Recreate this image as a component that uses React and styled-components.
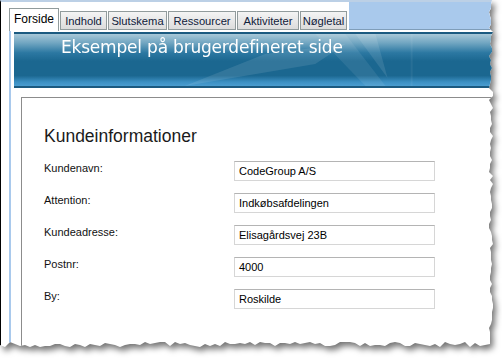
import React from 'react'
import styled, { createGlobalStyle } from 'styled-components'

const GlobalStyle = createGlobalStyle`
    html, body {
        margin: 0;
        padding: 0;
        background: #ffffff;
    }
    body {
        width: 502px;
        height: 362px;
        overflow: hidden;
        font-family: "Liberation Sans", Arial, sans-serif;
    }
`

const tabs = [
    { name: 'Forside', width: 50 },
    { name: 'Indhold', width: 47 },
    { name: 'Slutskema', width: 59 },
    { name: 'Ressourcer', width: 68 },
    { name: 'Aktiviteter', width: 62 },
    { name: 'Nøgletal', width: 47 },
]

const fields = [
    { label: 'Kundenavn:', value: 'CodeGroup A/S' },
    { label: 'Attention:', value: 'Indkøbsafdelingen' },
    { label: 'Kundeadresse:', value: 'Elisagårdsvej 23B' },
    { label: 'Postnr:', value: '4000' },
    { label: 'By:', value: 'Roskilde' },
]

// jagged "torn paper" edge on right and bottom
function tornPolygon() {
    let seed = 7
    const rnd = () => {
        seed = (seed * 9301 + 49297) % 233280
        return seed / 233280
    }
    const pts = ['0px 0px', '492px 0px']
    for (let y = 4; y < 344; y += 4) {
        pts.push(`${489 + Math.round(rnd() * 4)}px ${y}px`)
    }
    for (let x = 490; x > 0; x -= 5) {
        pts.push(`${x}px ${342 + Math.round(rnd() * 5)}px`)
    }
    pts.push('0px 345px')
    return `polygon(${pts.join(',')})`
}

function App() {
    return (
        <>
            <GlobalStyle />
            <Shadow>
                <Sheet style={{ clipPath: tornPolygon() }}>
                    <TabStrip>
                        {tabs.map((t, i) => (
                            <Tab key={t.name} active={i === 0} w={t.width}>{t.name}</Tab>
                        ))}
                        <StripFill />
                    </TabStrip>
                    <TabPage>
                        <Banner>
                            <Rays viewBox="0 0 480 52" preserveAspectRatio="none">
                                <path d="M170 52 L250 20 L330 10 L300 30 Z" fill="rgba(255,255,255,0.10)" />
                                <path d="M300 0 L350 52 L370 52 L330 0 Z" fill="rgba(255,255,255,0.08)" />
                                <path d="M340 0 L372 44 L360 0 Z" fill="rgba(255,255,255,0.10)" />
                                <rect x="395" y="0" width="2" height="52" fill="rgba(255,255,255,0.06)" />
                            </Rays>
                            <Title>Eksempel på brugerdefineret side</Title>
                        </Banner>
                        <Panel>
                            <Heading>Kundeinformationer</Heading>
                            <Form>
                                {fields.map(f => (
                                    <Row key={f.label}>
                                        <Label>{f.label}</Label>
                                        <Field>{f.value}</Field>
                                    </Row>
                                ))}
                            </Form>
                        </Panel>
                    </TabPage>
                </Sheet>
            </Shadow>
        </>
    )
}

export default App

const Shadow = styled.div`
    width: 502px;
    height: 362px;
    filter: drop-shadow(3px 4px 3px rgba(0, 0, 0, 0.55));
`

const Sheet = styled.div`
    width: 496px;
    height: 350px;
    background: #ffffff;
    border-left: 1px solid #000000;
    border-top: 2px solid #bcd0e6;
    box-sizing: border-box;
    display: flex;
    flex-direction: column;
`

const TabStrip = styled.div`
    display: flex;
    align-items: flex-end;
    height: 28px;
    padding-left: 8px;
    background: #ffffff;
`

const Tab = styled.div`
    width: ${p => p.w}px;
    height: ${p => (p.active ? '23px' : '19px')};
    display: flex;
    align-items: center;
    justify-content: center;
    font-size: ${p => (p.active ? '12px' : '11.2px')};
    color: ${p => (p.active ? '#000000' : '#10203a')};
    background: ${p => (p.active ? '#ffffff' : 'linear-gradient(#f4f4f4, #dcdcdc)')};
    border: 1px solid #919b9c;
    border-bottom: ${p => (p.active ? 'none' : '1px solid #919b9c')};
    margin-right: 1px;
    padding-bottom: ${p => (p.active ? '3px' : '0')};
    box-sizing: border-box;
    position: relative;
    top: ${p => (p.active ? '1px' : '0')};
`

const StripFill = styled.div`
    flex: 1;
    align-self: stretch;
    background: #a9c9ec;
    margin-left: 1px;
    border-bottom: 1px solid #7f9db9;
`

const TabPage = styled.div`
    flex: 1;
    margin-left: 8px;
    border-left: 2px solid #a9c9ec;
    padding-left: 3px;
    display: flex;
    flex-direction: column;
`

const Banner = styled.div`
    position: relative;
    height: 52px;
    margin-top: 2px;
    border-top: 2px solid #1b5a80;
    border-bottom: 2px solid #1b5a80;
    background: linear-gradient(
        #a8c8d8 0%,
        #6ea4c0 18%,
        #2c78a2 36%,
        #1b6790 52%,
        #1b6790 80%,
        #3b8fc2 92%,
        #4a9dd0 100%
    );
    overflow: hidden;
`

const Rays = styled.svg`
    position: absolute;
    left: 0;
    top: 0;
    width: 100%;
    height: 100%;
`

const Title = styled.div`
    position: relative;
    padding: 3px 0 0 47px;
    font-family: "DejaVu Sans", Verdana, sans-serif;
    font-size: 17px;
    color: #ffffff;
    letter-spacing: -0.2px;
`

const Panel = styled.div`
    flex: 1;
    margin: 9px 0 0 7px;
    border-top: 1px solid #8c8c8c;
    border-left: 1px solid #8c8c8c;
    padding: 28px 0 0 22px;
`

const Heading = styled.div`
    font-size: 17.5px;
    color: #1a1a1a;
    margin-bottom: 14px;
`

const Form = styled.div`
    display: flex;
    flex-direction: column;
    gap: 12px;
`

const Row = styled.div`
    display: grid;
    grid-template-columns: 190px 201px;
    align-items: start;
`

const Label = styled.div`
    font-size: 11px;
    color: #111111;
    padding-top: 1px;
`

const Field = styled.div`
    height: 20px;
    box-sizing: border-box;
    border: 1px solid #d6d6d6;
    border-top-color: #b4b4b4;
    padding: 3px 0 0 4px;
    font-size: 11px;
    color: #000000;
`
